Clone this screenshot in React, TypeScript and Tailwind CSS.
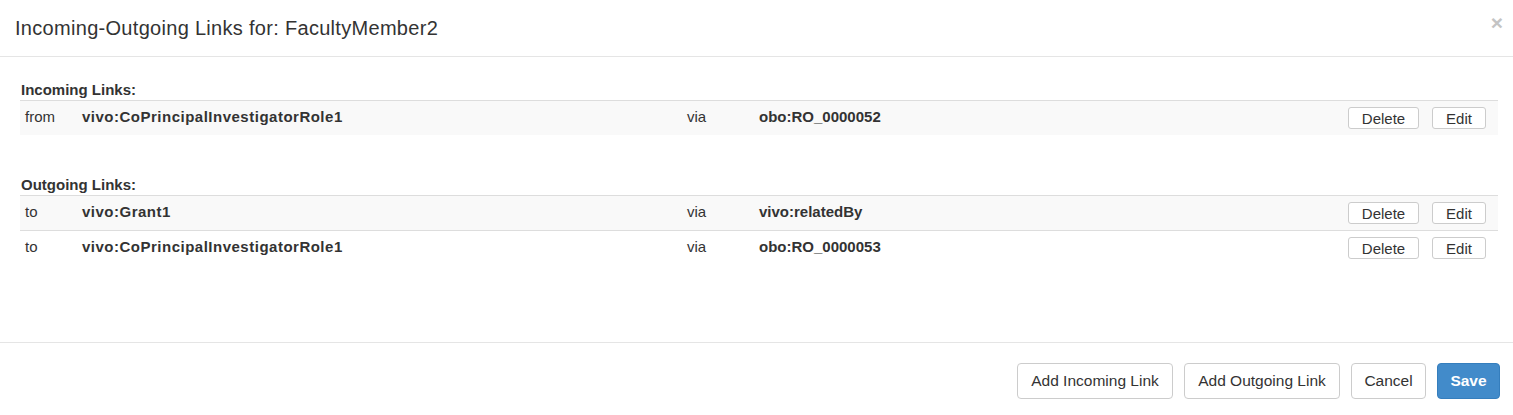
import React from 'react';

interface LinkRow {
  dir: string;
  target: string;
  via: string;
}

const incoming: LinkRow[] = [
  { dir: 'from', target: 'vivo:CoPrincipalInvestigatorRole1', via: 'obo:RO_0000052' },
];

const outgoing: LinkRow[] = [
  { dir: 'to', target: 'vivo:Grant1', via: 'vivo:relatedBy' },
  { dir: 'to', target: 'vivo:CoPrincipalInvestigatorRole1', via: 'obo:RO_0000053' },
];

const rowBtn =
  'h-[22px] rounded-[3px] border border-[#ccc] bg-white text-[15px] leading-none text-[#333]';

const LinkTable: React.FC<{ title: string; rows: LinkRow[] }> = ({ title, rows }) => (
  <div>
    <div className="h-[20px] pl-px text-[15px] font-bold leading-[20px] text-[#333]">{title}</div>
    <div>
      {rows.map((row, i) => (
        <div
          key={`${row.target}-${i}`}
          className={`grid h-[35px] grid-cols-[57px_605px_72px_1fr_auto] items-center border-t border-[#ddd] text-[15px] text-[#333] ${
            i % 2 === 0 ? 'bg-[#f9f9f9]' : 'bg-white'
          }`}
        >
          <div className="px-[5px] pb-[1px]">{row.dir}</div>
          <div className="px-[5px] pb-[1px] font-bold tracking-[0.5px]">{row.target}</div>
          <div className="px-[5px] pb-[1px]">via</div>
          <div className="px-[5px] pb-[1px] font-bold">{row.via}</div>
          <div className="flex gap-[13px] pr-[12px]">
            <button className={`${rowBtn} w-[71px]`}>Delete</button>
            <button className={`${rowBtn} w-[54px]`}>Edit</button>
          </div>
        </div>
      ))}
    </div>
  </div>
);

const footBtn =
  'h-[36px] rounded-[4px] border border-[#ccc] bg-white text-[15.5px] leading-none text-[#333]';

export default function App() {
  return (
    <div className="h-[415px] w-full bg-white font-['Liberation_Sans',Arial,sans-serif] text-[#333]">
      <div className="flex h-[57px] items-center justify-between border-b border-[#e5e5e5] pl-[15px] pr-[10px]">
        <h4 className="text-[20px] leading-[22px] tracking-[0.3px] text-[#333]">
          Incoming-Outgoing Links for: FacultyMember2
        </h4>
        <span className="mb-[12px] text-[21px] font-bold leading-none text-[#c4c4c4]">×</span>
      </div>

      <div className="flex flex-col gap-[40px] pb-[77px] pl-[20px] pr-[15px] pt-[23px]">
        <LinkTable title="Incoming Links:" rows={incoming} />
        <LinkTable title="Outgoing Links:" rows={outgoing} />
      </div>

      <div className="flex justify-end gap-[11px] border-t border-[#e5e5e5] pr-[13px] pt-[20px]">
        <button className={`${footBtn} w-[156px]`}>Add Incoming Link</button>
        <button className={`${footBtn} w-[156px]`}>Add Outgoing Link</button>
        <button className={`${footBtn} w-[75px]`}>Cancel</button>
        <button className="h-[36px] w-[63px] rounded-[4px] border border-[#357ebd] bg-[#428bca] text-[15.5px] font-bold leading-none text-white">
          Save
        </button>
      </div>
    </div>
  );
}
